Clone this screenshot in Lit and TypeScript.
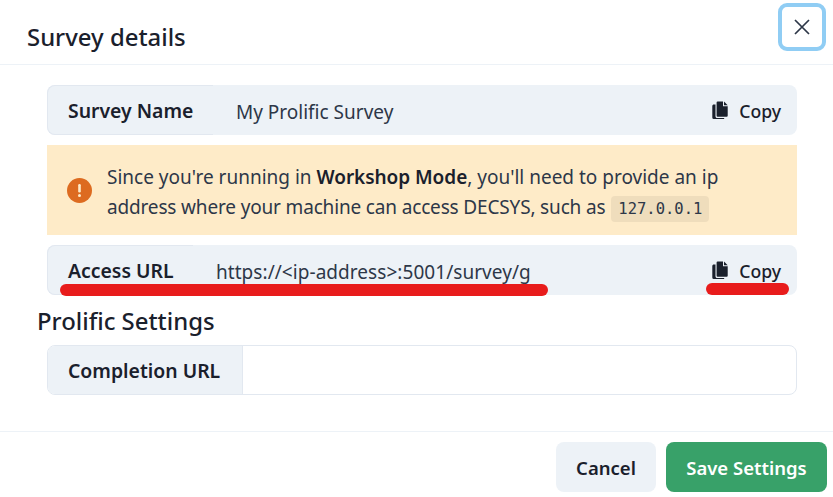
import { LitElement, html, css } from "lit";
import { customElement } from "lit/decorators.js";

const copyIcon = html`<svg class="copy-ico" viewBox="0 0 16 18" width="16" height="18" aria-hidden="true">
  <path fill="currentColor" d="M5.6 0.5h5.4v4.7h4.7v9.6a1 1 0 0 1-1 1H5.6a1 1 0 0 1-1-1V1.5a1 1 0 0 1 1-1z"/>
  <path fill="currentColor" d="M12 .5 15.7 4.2H12z"/>
  <path fill="currentColor" d="M3.5 3.6v11.6c0 1 .8 1.8 1.8 1.8h6.9v.5a.5.5 0 0 1-.5.5H1.8A1.5 1.5 0 0 1 .3 16.5V5.1c0-.8.7-1.5 1.5-1.5z"/>
</svg>`;

@customElement("app-root")
export class AppRoot extends LitElement {
  static styles = css`
    :host {
      display: block;
      width: 833px;
      height: 497px;
      overflow: hidden;
      background: #fff;
      color: #1a202c;
      font-family: "Noto Sans", "Open Sans", sans-serif;
      font-size: 19px;
      position: relative;
    }
    .modal { display: flex; flex-direction: column; height: 497px; }
    header {
      height: 64px;
      box-sizing: content-box;
      border-bottom: 1px solid #edf2f7;
      padding-left: 27px;
      display: flex;
      align-items: center;
      flex: none;
    }
    h2 { margin: 0; font-size: 23.9px; font-weight: 500; line-height: 30px; position: relative; top: 5px; }
    .close {
      position: absolute;
      left: 778px;
      top: 3px;
      width: 48px;
      height: 48px;
      box-sizing: border-box;
      border: 4px solid #90cdf4;
      border-radius: 9px;
      background: #fff;
      padding: 0;
      display: flex;
      align-items: center;
      justify-content: center;
      color: #2d3748;
    }
    main {
      flex: 1;
      padding: 20px 36px 0 47px;
      display: flex;
      flex-direction: column;
    }
    .group {
      height: 50px;
      display: flex;
      align-items: center;
      background: #edf2f7;
      border-radius: 8px;
      flex: none;
    }
    .addon {
      height: 100%;
      box-sizing: border-box;
      border: 1px solid #e2e8f0;
      border-right: none;
      border-radius: 8px 0 0 8px;
      display: flex;
      align-items: center;
      padding-left: 20px;
      font-weight: 600;
      font-size: 19.4px;
      flex: none;
    }
    .name .addon { width: 166px; }
    .url .addon { width: 146px; }
    .value { flex: 1; font-size: 19px; color: #2d3748; padding-top: 3px; }
    .name .value { padding-left: 23px; }
    .url .value { padding-left: 23px; letter-spacing: 0.05px; }
    .copy {
      display: flex;
      align-items: center;
      gap: 11px;
      padding-right: 16px;
      font-size: 17.6px;
      font-weight: 500;
    }
    .copy span { padding-top: 2px; }
    .copy-ico { display: block; }
    .alert {
      margin: 10px 0;
      height: 90px;
      box-sizing: border-box;
      background: #feebc8;
      display: flex;
      align-items: center;
      padding: 0 20px;
      flex: none;
      color: #2d3748;
    }
    .alert-ico { flex: none; margin-right: 15px; display: block; }
    .alert p { margin: 0; line-height: 30px; font-size: 19px; padding-top: 5px; }
    .alert b { font-weight: 600; color: #1a202c; letter-spacing: -0.05px; }
    .tight { letter-spacing: -0.16px; }
    code {
      font-family: "DejaVu Sans Mono", "Liberation Mono", monospace;
      font-size: 15.5px;
      background: rgba(0, 0, 0, 0.06);
      border-radius: 4px;
      padding: 4px 7px;
      margin-left: 1px;
    }
    h3 {
      margin: 0 0 0 -10px;
      font-size: 23.9px;
      font-weight: 500;
      line-height: 30px;
      padding-top: 11px;
      height: 39px;
      flex: none;
    }
    .input-group {
      height: 50px;
      display: flex;
      border: 1px solid #e2e8f0;
      border-radius: 8px;
      box-sizing: border-box;
      overflow: hidden;
      flex: none;
    }
    .input-group .label {
      width: 195px;
      background: #edf2f7;
      border-right: 1px solid #e2e8f0;
      display: flex;
      align-items: center;
      padding-left: 20px;
      box-sizing: border-box;
      font-weight: 600;
      font-size: 19.4px;
    }
    footer {
      height: 66px;
      border-top: 1px solid #edf2f7;
      display: flex;
      justify-content: flex-end;
      gap: 10px;
      padding: 10px 6px 0 0;
      flex: none;
      box-sizing: border-box;
    }
    button.btn {
      height: 50px;
      border: none;
      border-radius: 8px;
      font: inherit;
      font-weight: 600;
      font-size: 18.5px;
      padding: 0;
    }
    .cancel { width: 100px; background: #edf2f7; color: #1a202c; }
    .save { width: 161px; background: #38a169; color: #fff; }
    .mark {
      position: absolute;
      height: 12px;
      border-radius: 6px;
      background: #e81c1c;
    }
    .m1 { left: 60px; top: 284px; width: 488px; }
    .m2 { left: 706px; top: 283px; width: 83px; }
  `;

  render() {
    return html`
      <div class="modal">
        <header><h2>Survey details</h2></header>
        <button class="close" aria-label="Close">
          <svg width="16" height="16" viewBox="0 0 16 16"><path d="M1 1l14 14M15 1 1 15" stroke="currentColor" stroke-width="1.7" fill="none"/></svg>
        </button>
        <main>
          <div class="group name">
            <div class="addon">Survey Name</div>
            <div class="value">My Prolific Survey</div>
            <div class="copy">${copyIcon}<span>Copy</span></div>
          </div>
          <div class="alert">
            <svg class="alert-ico" width="25" height="25" viewBox="0 0 25 25">
              <circle cx="12.5" cy="12.5" r="12.5" fill="#dd6b20"/>
              <rect x="11.2" y="6" width="2.6" height="8.5" rx="1.2" fill="#feebc8"/>
              <circle cx="12.5" cy="17.6" r="1.5" fill="#feebc8"/>
            </svg>
            <p>Since you're running in <b>Workshop Mode</b>, you'll need to provide an ip<br /><span class="tight">address where your machine can access DECSYS, such as</span> <code>127.0.0.1</code></p>
          </div>
          <div class="group url">
            <div class="addon">Access URL</div>
            <div class="value">https://&lt;ip-address&gt;:5001/survey/g</div>
            <div class="copy">${copyIcon}<span>Copy</span></div>
          </div>
          <h3>Prolific Settings</h3>
          <div class="input-group">
            <div class="label">Completion URL</div>
          </div>
        </main>
        <footer>
          <button class="btn cancel">Cancel</button>
          <button class="btn save">Save Settings</button>
        </footer>
      </div>
      <div class="mark m1"></div>
      <div class="mark m2"></div>
    `;
  }
}
